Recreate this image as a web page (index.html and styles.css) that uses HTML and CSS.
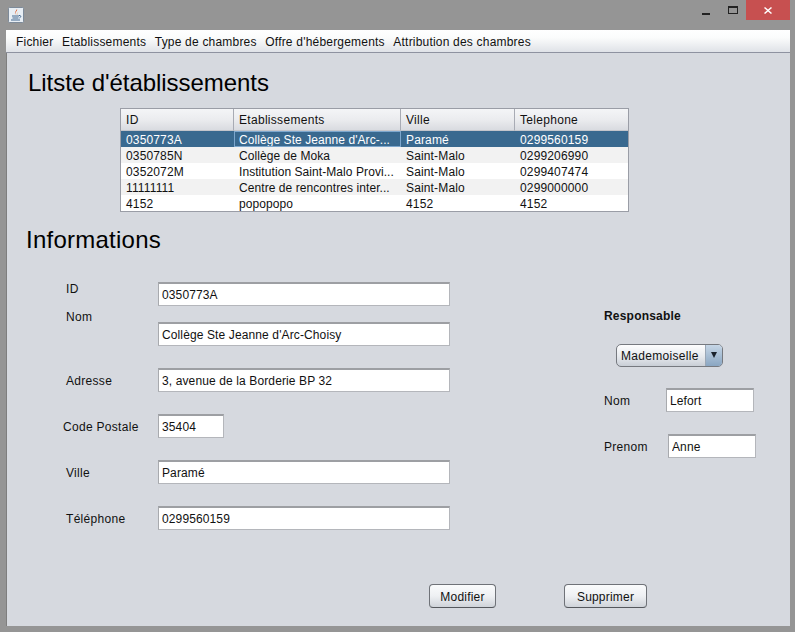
FILE: index.html
```html
<!DOCTYPE html>
<html lang="fr">
<head>
    <meta charset="UTF-8">
    <title>Etablissements</title>
    <link rel="stylesheet" href="styles.css">
</head>
<body>
    <div class="window">
        <div class="titlebar">
            <svg class="app-icon" width="16" height="16" viewBox="0 0 16 16">
                <rect x="0.5" y="0.5" width="15" height="15" rx="1" fill="#e8eef4" stroke="#7d8a99"/>
                <path d="M9 2c1 2-2.500 3-1.500 5.500C6 6 8 4 9 2z" fill="#d9541e"/>
                <path d="M10.500 5c-1 1-2 1.500-1 3.500-1.500-1-.5-2.500 1-3.500z" fill="#e8872c"/>
                <path d="M4 9h7M4.500 11h6M3 13h9" stroke="#44688f" stroke-width="1"/>
                <path d="M11 8.500c2-.5 2.500 1.500.5 2.500" stroke="#44688f" fill="none"/>
            </svg>
            <div class="win-controls">
                <svg class="win-min" width="8" height="2" viewBox="0 0 8 2"><rect width="8" height="2" fill="#222"/></svg>
                <svg class="win-max" width="10" height="8" viewBox="0 0 10 8"><rect x="0.500" y="0.500" width="9" height="7" fill="none" stroke="#222"/><rect x="0" y="0" width="10" height="2" fill="#222"/></svg>
                <div class="win-close">
                    <svg width="8" height="7" viewBox="0 0 8 7"><path d="M1 0l3 2.500L7 0l1 1-3 2.500L8 6 7 7 4 4.500 1 7 0 6l3-2.500L0 1z" fill="#fff"/></svg>
                </div>
            </div>
        </div>

        <div class="content">
            <div class="menubar">
                <span class="menu-item">Fichier</span>
                <span class="menu-item">Etablissements</span>
                <span class="menu-item">Type de chambres</span>
                <span class="menu-item">Offre d'hébergements</span>
                <span class="menu-item">Attribution des chambres</span>
            </div>

            <h1 class="heading heading-list">Litste d'établissements</h1>

            <div class="table-box">
                <table class="records">
                    <thead>
                        <tr>
                            <th class="col-id">ID</th>
                            <th class="col-name">Etablissements</th>
                            <th class="col-city">Ville</th>
                            <th>Telephone</th>
                        </tr>
                    </thead>
                    <tbody>
                        <tr class="selected">
                            <td>0350773A</td>
                            <td class="cell-name focused">Collège Ste Jeanne d'Arc-...</td>
                            <td>Paramé</td>
                            <td>0299560159</td>
                        </tr>
                        <tr class="alt">
                            <td>0350785N</td>
                            <td class="cell-name">Collège de Moka</td>
                            <td>Saint-Malo</td>
                            <td>0299206990</td>
                        </tr>
                        <tr>
                            <td>0352072M</td>
                            <td class="cell-name">Institution Saint-Malo Provi...</td>
                            <td>Saint-Malo</td>
                            <td>0299407474</td>
                        </tr>
                        <tr class="alt">
                            <td>11111111</td>
                            <td class="cell-name">Centre de rencontres inter...</td>
                            <td>Saint-Malo</td>
                            <td>0299000000</td>
                        </tr>
                        <tr>
                            <td>4152</td>
                            <td class="cell-name">popopopo</td>
                            <td>4152</td>
                            <td>4152</td>
                        </tr>
                    </tbody>
                </table>
            </div>

            <h1 class="heading heading-info">Informations</h1>

            <div class="form">
                <div class="fields">
                    <div class="row">
                        <label class="label label-id">ID</label>
                        <input class="input input-wide" type="text" value="0350773A">
                    </div>
                    <div class="row row-nom">
                        <label class="label label-nom">Nom</label>
                        <input class="input input-wide" type="text" value="Collège Ste Jeanne d'Arc-Choisy">
                    </div>
                    <div class="row row-spaced">
                        <label class="label">Adresse</label>
                        <input class="input input-wide" type="text" value="3, avenue de la Borderie BP 32">
                    </div>
                    <div class="row row-spaced">
                        <label class="label label-code">Code Postale</label>
                        <input class="input input-code" type="text" value="35404">
                    </div>
                    <div class="row row-spaced">
                        <label class="label">Ville</label>
                        <input class="input input-wide" type="text" value="Paramé">
                    </div>
                    <div class="row row-spaced">
                        <label class="label">Téléphone</label>
                        <input class="input input-wide" type="text" value="0299560159">
                    </div>
                </div>

                <div class="contact">
                    <div class="contact-title">Responsable</div>
                    <div class="combo">
                        <span class="combo-value">Mademoiselle</span>
                        <span class="combo-arrow"></span>
                    </div>
                    <div class="contact-row contact-nom">
                        <label class="contact-label">Nom</label>
                        <input class="input input-short" type="text" value="Lefort">
                    </div>
                    <div class="contact-row contact-prenom">
                        <label class="contact-label">Prenom</label>
                        <input class="input input-short" type="text" value="Anne">
                    </div>
                </div>
            </div>

            <div class="actions">
                <button class="btn">Modifier</button>
                <button class="btn btn-delete">Supprimer</button>
            </div>
        </div>
    </div>
</body>
</html>
```

FILE: styles.css
```css
html, body {
    margin: 0;
    height: 632px;
    overflow: hidden;
}

body {
    font-family: 'Liberation Sans', Arial, sans-serif;
    font-size: 12px;
    letter-spacing: 0.3px;
    color: #111;
    background-color: #959595;
}

.window {
    display: flex;
    flex-direction: column;
    height: 632px;
    padding: 0 5px 6px 6px;
    box-sizing: border-box;
}

.titlebar {
    display: flex;
    justify-content: space-between;
    align-items: flex-start;
    height: 30px;
    flex: none;
}

.app-icon {
    margin: 7px 0 0 2px;
}

.win-controls {
    display: flex;
    align-items: flex-start;
}

.win-min {
    margin: 13px 18px 0 0;
}

.win-max {
    margin: 6px 8px 0 0;
}

.win-close {
    display: flex;
    align-items: center;
    justify-content: center;
    width: 44px;
    height: 20px;
    background-color: #c75050;
}

.content {
    flex: 1;
    background-color: #d6d9df;
    box-shadow: inset 1px 0 0 #7e7e7e;
}

.menubar {
    display: flex;
    gap: 8.6px;
    align-items: center;
    box-sizing: border-box;
    height: 23px;
    padding: 2px 0 0 10px;
    letter-spacing: 0.2px;
    background: linear-gradient(to bottom, #ffffff, #fbfcfc 35%, #dfe2e7);
    border-bottom: 1px solid #8e92a0;
}

.heading {
    margin: 0;
    font-size: 24px;
    font-weight: normal;
    line-height: 30px;
    color: #000;
}

.heading-list {
    margin: 15px 0 0 22px;
    letter-spacing: -0.05px;
}

.heading-info {
    margin: 13px 0 0 20px;
    letter-spacing: 0.25px;
}

.table-box {
    width: 509px;
    height: 104px;
    margin: 10px 0 0 114px;
    border: 1px solid #9a9da6;
    box-sizing: border-box;
    background-color: #fff;
}

.records {
    width: 100%;
    border-collapse: separate;
    border-spacing: 0;
    table-layout: fixed;
}

.records th {
    height: 22px;
    padding: 0 5px;
    box-sizing: border-box;
    text-align: left;
    font-weight: normal;
    background: linear-gradient(to bottom, #f4f5f7, #ebecef 50%, #d9dbe0);
    border-right: 1px solid #a8abb4;
    border-bottom: 1px solid #c3c5cb;
}

.records th:last-child {
    border-right: none;
}

.col-id {
    width: 113px;
}

.col-name {
    width: 167px;
}

.col-city {
    width: 114px;
}

.records td {
    height: 16px;
    padding: 2px 5px 0;
    box-sizing: border-box;
    white-space: nowrap;
    overflow: hidden;
    line-height: 14px;
    letter-spacing: 0.15px;
}

.records .cell-name {
    letter-spacing: 0.07px;
}

.records .alt td {
    background-color: #f2f2f2;
}

.records .selected td {
    background-color: #39698f;
    color: #fff;
}

.records .selected .focused {
    outline: 1px solid #7da7cd;
    outline-offset: -1px;
}

.fields {
    padding: 27px 0 0 60px;
}

.form {
    display: flex;
}

.row {
    display: flex;
    align-items: center;
    height: 24px;
}

.row-nom {
    margin-top: 16px;
}

.row-spaced {
    margin-top: 22px;
}

.label {
    width: 92px;
    flex: none;
    padding-top: 1px;
}

.label-id {
    align-self: flex-start;
    margin-top: -1px;
}

.label-nom {
    align-self: flex-start;
    margin-top: -13px;
}

.label-code {
    width: 95px;
    margin-left: -3px;
}

.input {
    box-sizing: border-box;
    height: 24px;
    padding: 1px 3px 0;
    font-family: inherit;
    font-size: 12px;
    letter-spacing: 0.12px;
    color: #111;
    background-color: #fff;
    border: 1px solid #b4b6bb;
    border-top: 2px solid #9d9fa3;
    border-left-color: #a8aaae;
    border-radius: 0;
    outline: none;
}

.input-wide {
    width: 292px;
}

.input-code {
    width: 66px;
}

.input-short {
    width: 88px;
}

.contact {
    margin: 54px 0 0 154px;
}

.contact-title {
    font-weight: bold;
    line-height: 14px;
    letter-spacing: 0.2px;
}

.combo {
    display: flex;
    box-sizing: border-box;
    width: 107px;
    height: 23px;
    margin: 21px 0 0 12px;
    background: linear-gradient(to bottom, #fdfdfe, #e6e9ed 55%, #c9ced6);
    border: 1px solid #76797f;
    border-radius: 5px;
    overflow: hidden;
}

.combo-value {
    flex: 1;
    padding: 1px 0 0 4px;
    line-height: 21px;
}

.combo-arrow {
    position: relative;
    width: 16px;
    background: linear-gradient(to bottom, #c6d6e6, #8aa6c2);
    border-left: 1px solid #9aa7b6;
}

.combo-arrow::after {
    content: "";
    position: absolute;
    left: 5px;
    top: 7px;
    border-left: 3.5px solid transparent;
    border-right: 3.5px solid transparent;
    border-top: 6px solid #1a222c;
}

.contact-row {
    display: flex;
    align-items: center;
}

.contact-nom {
    margin-top: 21px;
}

.contact-prenom {
    margin-top: 22px;
}

.contact-nom .contact-label {
    width: 62px;
    padding-top: 1px;
}

.contact-prenom .contact-label {
    width: 64px;
    padding-top: 1px;
}

.actions {
    display: flex;
    gap: 68px;
    margin-top: 54px;
    padding-left: 423px;
}

.btn {
    box-sizing: border-box;
    width: 67px;
    height: 24px;
    padding: 1px 0 0;
    font-family: inherit;
    font-size: 12px;
    letter-spacing: 0.2px;
    color: #111;
    background: linear-gradient(to bottom, #fafbfc, #eef0f3 50%, #cfd3d9);
    border: 1px solid #6f7278;
    border-bottom-color: #55585d;
    border-radius: 4px;
}

.btn-delete {
    width: 83px;
}
```
